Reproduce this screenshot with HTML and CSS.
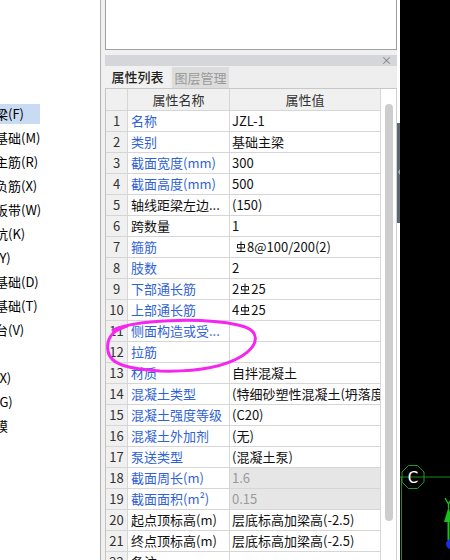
FILE: index.html
```html
<!DOCTYPE html>
<html lang="zh">
<head>
<meta charset="utf-8">
<title>属性列表</title>
<link rel="stylesheet" href="styles.css">
</head>
<body>
<div class="app">
  <div class="tree">
    <ul class="tree-list">
      <li><span class="item sel">基础梁(F)</span></li>
      <li><span class="item">筏板基础(M)</span></li>
      <li><span class="item">筏板主筋(R)</span></li>
      <li><span class="item">筏板负筋(X)</span></li>
      <li><span class="item">基础板带(W)</span></li>
      <li><span class="item">集水坑(K)</span></li>
      <li><span class="item">柱墩(Y)</span></li>
      <li><span class="item">独立基础(D)</span></li>
      <li><span class="item">条形基础(T)</span></li>
      <li><span class="item">桩承台(V)</span></li>
      <li><span class="item">桩(U)</span></li>
      <li><span class="item">垫层(X)</span></li>
      <li><span class="item">地沟(G)</span></li>
      <li><span class="item">砖胎膜</span></li>
    </ul>
  </div>

  <div class="mid">
    <div class="topbox"></div>
    <div class="titlebar"><span class="close">×</span></div>
    <div class="tabs">
      <div class="tab active">属性列表</div>
      <div class="tab inactive">图层管理</div>
    </div>
    <div class="body">
      <div class="grid">
        <div class="row head"><div class="c num"></div><div class="c hname">属性名称</div><div class="c hval">属性值</div></div>
        <div class="row"><div class="c num">1</div><div class="c name b">名称</div><div class="c val">JZL-1</div></div>
        <div class="row"><div class="c num">2</div><div class="c name b">类别</div><div class="c val">基础主梁</div></div>
        <div class="row"><div class="c num">3</div><div class="c name b">截面宽度(mm)</div><div class="c val">300</div></div>
        <div class="row"><div class="c num">4</div><div class="c name b">截面高度(mm)</div><div class="c val">500</div></div>
        <div class="row"><div class="c num">5</div><div class="c name">轴线距梁左边...</div><div class="c val">(150)</div></div>
        <div class="row"><div class="c num">6</div><div class="c name">跨数量</div><div class="c val">1</div></div>
        <div class="row"><div class="c num">7</div><div class="c name b">箍筋</div><div class="c val"><svg class="rb first" viewBox="0 0 10 12"><path d="M5 0.5V10M1.5 3.5h7v3.5h-7zM0.5 10.5h9"/></svg>8@100/200(2)</div></div>
        <div class="row"><div class="c num">8</div><div class="c name b">肢数</div><div class="c val">2</div></div>
        <div class="row"><div class="c num">9</div><div class="c name b">下部通长筋</div><div class="c val">2<svg class="rb" viewBox="0 0 10 12"><path d="M5 0.5V10M1.5 3.5h7v3.5h-7zM0.5 10.5h9"/></svg>25</div></div>
        <div class="row"><div class="c num">10</div><div class="c name b">上部通长筋</div><div class="c val">4<svg class="rb" viewBox="0 0 10 12"><path d="M5 0.5V10M1.5 3.5h7v3.5h-7zM0.5 10.5h9"/></svg>25</div></div>
        <div class="row"><div class="c num">11</div><div class="c name b">侧面构造或受...</div><div class="c val"></div></div>
        <div class="row"><div class="c num">12</div><div class="c name b">拉筋</div><div class="c val"></div></div>
        <div class="row"><div class="c num">13</div><div class="c name b">材质</div><div class="c val">自拌混凝土</div></div>
        <div class="row"><div class="c num">14</div><div class="c name b">混凝土类型</div><div class="c val">(特细砂塑性混凝土(坍落度10~30mm)</div></div>
        <div class="row"><div class="c num">15</div><div class="c name b">混凝土强度等级</div><div class="c val">(C20)</div></div>
        <div class="row"><div class="c num">16</div><div class="c name b">混凝土外加剂</div><div class="c val">(无)</div></div>
        <div class="row"><div class="c num">17</div><div class="c name b">泵送类型</div><div class="c val">(混凝土泵)</div></div>
        <div class="row"><div class="c num">18</div><div class="c name b">截面周长(m)</div><div class="c val ro">1.6</div></div>
        <div class="row"><div class="c num">19</div><div class="c name b">截面面积(m²)</div><div class="c val ro">0.15</div></div>
        <div class="row"><div class="c num">20</div><div class="c name">起点顶标高(m)</div><div class="c val">层底标高加梁高(-2.5)</div></div>
        <div class="row"><div class="c num">21</div><div class="c name">终点顶标高(m)</div><div class="c val">层底标高加梁高(-2.5)</div></div>
        <div class="row"><div class="c num">22</div><div class="c name">备注</div><div class="c val"></div></div>
      </div>
      <div class="vscroll"><div class="thumb"></div></div>
    </div>
  </div>

  <div class="splitter"><div class="handle"><span class="notch"></span></div></div>

  <div class="canvas">
    <svg class="cad" viewBox="0 0 50 560" width="50" height="560">
      <line x1="0" y1="477" x2="50" y2="477" stroke="#1b8a1b" stroke-width="1"/>
      <line x1="1.5" y1="477" x2="1.5" y2="560" stroke="#1b8a1b" stroke-width="1"/>
      <polygon points="8.5,465.5 17.5,465.5 24,472 24,482 17.5,488.5 8.5,488.5 2,482 2,472" fill="none" stroke="#23962a" stroke-width="1"/>
      <text x="13" y="482.5" class="cad-c">C</text>
      <line x1="48.5" y1="512" x2="48.5" y2="540" stroke="#19c019" stroke-width="2"/>
      <polygon points="44,522 48.5,507 53,522" fill="#19c019"/>
      <path d="M45 498 L48.5 504 L52 498 M48.5 504 V508" fill="none" stroke="#19c019" stroke-width="1.4"/>
      <circle cx="51" cy="544" r="5" fill="#1a2ee0"/>
    </svg>
  </div>

  <svg class="mark" viewBox="0 0 450 560" width="450" height="560">
    <path d="M113 330 C 135 320, 200 317, 238 325 C 262 330, 259 345, 242 356 C 224 367, 196 372, 160 371 C 130 369, 110 365, 108 351 C 106 339, 111 331, 127 326"/>
  </svg>
</div>
</body>
</html>
```

FILE: styles.css
```css
html, body {
  margin: 0;
  padding: 0;
}

body {
  width: 450px;
  height: 560px;
  overflow: hidden;
  font-family: "Noto Sans CJK SC", "Noto Sans", sans-serif;
  font-size: 13px;
  color: #000;
}

.app {
  display: flex;
  height: 560px;
  position: relative;
}

/* left tree */
.tree {
  width: 100px;
  flex: none;
  background: #fff;
  border-right: 1px solid #b2b2b2;
  overflow: hidden;
}

.tree-list {
  list-style: none;
  margin: 102px 0 0 -31px;
  padding: 0;
  white-space: nowrap;
}

.tree-list li {
  height: 24px;
  padding-top: 2px;
  box-sizing: border-box;
}

.item {
  display: inline-block;
  height: 20px;
  line-height: 20px;
  color: #000;
}

.item.sel {
  background: #c9dbf2;
  padding-right: 16px;
}

/* middle panel */
.mid {
  width: 296px;
  flex: none;
  background: #f0f0f0;
  padding-left: 4px;
  box-sizing: border-box;
  display: flex;
  flex-direction: column;
}

.topbox {
  height: 50px;
  flex: none;
  box-sizing: border-box;
  background: #fff;
  border: 1px solid #a0a0a0;
  border-top: none;
  margin-bottom: 5px;
}

.titlebar {
  height: 11px;
  flex: none;
  background: #d4d6da;
  display: flex;
  justify-content: flex-end;
  align-items: center;
  padding-right: 5px;
}

.close {
  font-size: 11px;
  line-height: 11px;
  color: #7a7a7a;
}

.tabs {
  height: 23px;
  flex: none;
  box-sizing: border-box;
  border-bottom: 1px solid #c8c8c8;
  background: #eeeeee;
  display: flex;
  align-items: flex-end;
}

.tab {
  text-align: center;
}

.tab.active {
  width: 65px;
  height: 22px;
  line-height: 22px;
  color: #1e1e1e;
  background: #f1f1f1;
  font-weight: 500;
}

.tab.inactive {
  width: 57px;
  height: 21px;
  line-height: 21px;
  margin-left: 2px;
  background: #dcdcdc;
  color: #9a9a9a;
}

.body {
  display: flex;
  flex: 1;
  min-height: 0;
  overflow: hidden;
}

.grid {
  width: 276px;
  flex: none;
  box-sizing: border-box;
  border-left: 1px solid #c4c4c4;
  background: #fff;
}

.row {
  display: grid;
  grid-template-columns: 22px 102px 151px;
  height: 21px;
}

.row.head {
  height: 22px;
}

.c {
  box-sizing: border-box;
  border-right: 1px solid #d6d6d6;
  border-bottom: 1px solid #d6d6d6;
  line-height: 20px;
  white-space: nowrap;
  overflow: hidden;
}

.head .c {
  background: #f0f0f0;
  line-height: 21px;
  text-align: center;
  color: #333;
}

.num {
  background: #f0f0f0;
  text-align: center;
  color: #333;
}

.name {
  padding-left: 3px;
  color: #111;
}

.name.b {
  color: #2f62d6;
}

.val {
  padding-left: 2px;
  color: #111;
}

.val.ro {
  background: #e6e6e6;
  color: #9a9a9a;
}

.rb {
  width: 10px;
  height: 12px;
  vertical-align: -1px;
  margin: 0 1px;
}

.rb.first {
  margin-left: 4px;
}

.rb path {
  fill: none;
  stroke: #111;
  stroke-width: 1;
}

.vscroll {
  width: 16px;
  flex: none;
  box-sizing: border-box;
  border-right: 1px solid #d2d2d2;
  background: #fff;
}

.thumb {
  margin: 15px 0 0 4px;
  width: 8px;
  height: 417px;
  background: #cdcdcd;
  border-radius: 4px;
}

/* splitter */
.splitter {
  width: 3px;
  flex: none;
  background: #fff;
}

.handle {
  margin-top: 123px;
  height: 100px;
  background: #5c6671;
  position: relative;
}

.notch {
  position: absolute;
  left: 1px;
  top: 46px;
  width: 0;
  height: 0;
  border-top: 3px solid transparent;
  border-bottom: 3px solid transparent;
  border-right: 2px solid #aab0b8;
}

/* cad canvas */
.canvas {
  flex: 1;
  background: #000;
  overflow: hidden;
}

.cad {
  display: block;
}

.cad-c {
  fill: #fff;
  font-family: "DejaVu Sans", sans-serif;
  font-size: 15px;
  text-anchor: middle;
}

/* hand drawn marker */
.mark {
  position: absolute;
  left: 0;
  top: 0;
  pointer-events: none;
}

.mark path {
  fill: none;
  stroke: #f626f2;
  stroke-width: 3;
  stroke-linecap: round;
  stroke-linejoin: round;
}
```
